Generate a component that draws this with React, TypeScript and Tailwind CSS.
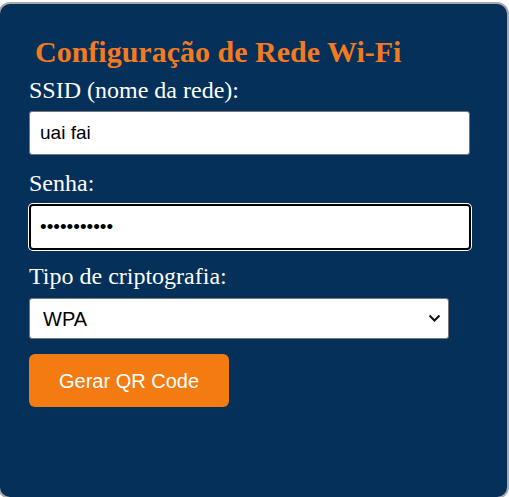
import React, { useState } from "react";

const App = () => {
  const [ssid, setSsid] = useState("uai fai");
  const [senha, setSenha] = useState("12345678901");
  const [tipo, setTipo] = useState("WPA");

  return (
    <div className="w-[509px] h-[497px] overflow-hidden bg-white">
      <div className="mt-[2px] ml-[-2px] w-[511px] h-[497px] rounded-[12px] border-2 border-[#a9a9a9] bg-[#04305a] pl-[29px] pt-[31px]">
        <form
          className="flex flex-col items-start"
          onSubmit={(e) => e.preventDefault()}
        >
          <h2 className="ml-[6px] text-[30px] leading-[34px] font-bold text-[#f47a1f] font-['Times_New_Roman','Liberation_Serif',serif]">
            Configuração de Rede Wi-Fi
          </h2>
          <label className="mt-[7px] text-[24px] leading-[28px] text-white font-['Times_New_Roman','Liberation_Serif',serif]">
            SSID (nome da rede):
          </label>
          <input
            type="text"
            value={ssid}
            onChange={(e) => setSsid(e.target.value)}
            className="mt-[7px] w-[441px] h-[44px] rounded-[3px] border border-[#767676] bg-white px-[10px] text-[19px] text-black font-['Arial','Liberation_Sans',sans-serif] outline-none"
          />
          <label className="mt-[14px] text-[24px] leading-[28px] text-white font-['Times_New_Roman','Liberation_Serif',serif]">
            Senha:
          </label>
          <input
            type="password"
            value={senha}
            onChange={(e) => setSenha(e.target.value)}
            className="mt-[7px] w-[442px] h-[46px] rounded-[4px] border-2 border-black ring-1 ring-white bg-white px-[9px] text-[19px] text-black font-['Arial','Liberation_Sans',sans-serif] outline-none"
          />
          <label className="mt-[12px] text-[24px] leading-[28px] text-white font-['Times_New_Roman','Liberation_Serif',serif]">
            Tipo de criptografia:
          </label>
          <div className="relative mt-[8px]">
            <select
              value={tipo}
              onChange={(e) => setTipo(e.target.value)}
              className="block appearance-none w-[420px] h-[41px] rounded-[3px] border border-[#767676] bg-white pl-[13px] text-[20px] text-black font-['Arial','Liberation_Sans',sans-serif] outline-none"
            >
              <option value="WPA">WPA</option>
              <option value="WEP">WEP</option>
              <option value="nopass">Nenhuma</option>
            </select>
            <svg
              className="pointer-events-none absolute right-[8px] top-[16px]"
              width="13"
              height="9"
              viewBox="0 0 13 9"
              fill="none"
            >
              <path d="M1.5 1.5 L6.5 6.5 L11.5 1.5" stroke="#111" strokeWidth="2" />
            </svg>
          </div>
          <button
            type="submit"
            className="mt-[15px] w-[200px] h-[53px] rounded-[6px] bg-[#f37b12] text-[20px] text-white font-['Arial','Liberation_Sans',sans-serif]"
          >
            Gerar QR Code
          </button>
        </form>
      </div>
    </div>
  );
};

export default App;
